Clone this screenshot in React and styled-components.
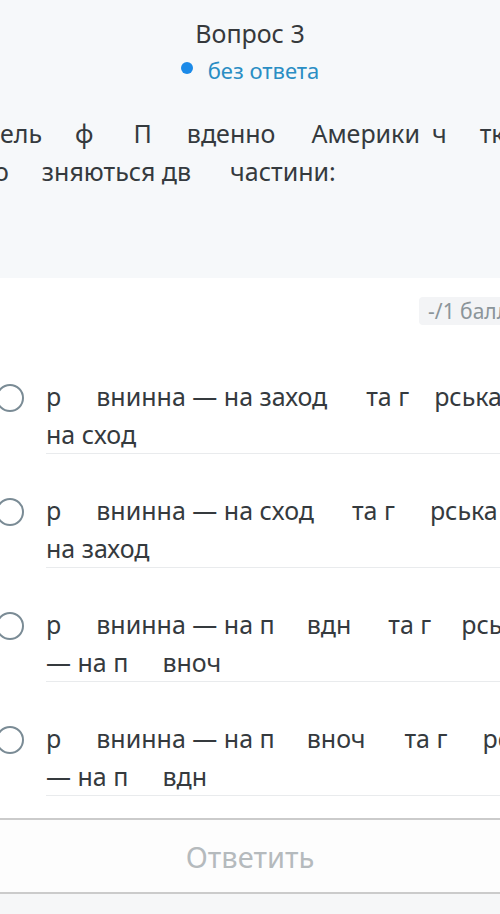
import React from 'react';
import styled, { createGlobalStyle } from 'styled-components';

const GlobalStyle = createGlobalStyle`
  body {
    margin: 0;
    background: #f6f7f8;
    font-family: "Noto Sans", Roboto, sans-serif;
    overflow-x: hidden;
  }
`;

const Page = styled.div`
        width: 500px;
        overflow: hidden;
        background: #fff;
      `,
      QuestionPanel = styled.section`
        background: #f6f8fa;
        padding: 17px 0 88px;
      `,
      Title = styled.h1`
        margin: 0;
        text-align: center;
        font-size: 25px;
        line-height: 32px;
        font-weight: 400;
        color: #36393c;
      `,
      Status = styled.div`
        display: flex;
        align-items: center;
        justify-content: center;
        gap: 15px;
        margin-top: 6px;
        font-size: 22px;
        line-height: 30px;
        color: #2a8ec4;
      `,
      Dot = styled.span`
        width: 12px;
        height: 12px;
        border-radius: 50%;
        background: #1b8ae8;
        margin-top: -4px;
      `,
      QuestionText = styled.div`
        margin-top: 29px;
        font-size: 25px;
        line-height: 38px;
        color: #353a3e;
      `,
      Line = styled.div`
        display: flex;
        white-space: pre;
      `,
      Word = styled.span`
        flex-shrink: 0;
        margin-left: ${p => p.gap || 0}px;
      `,
      ScoreRow = styled.div`
        display: flex;
        justify-content: flex-end;
        margin: 19px -18px 0 0;
      `,
      ScorePill = styled.span`
        height: 28px;
        line-height: 28px;
        padding: 0 9px;
        border-radius: 4px;
        background: #f3f4f6;
        font-size: 21px;
        color: #8b959a;
        white-space: nowrap;
      `,
      OptionList = styled.div`
        margin-top: 15px;
      `,
      Option = styled.label`
        display: flex;
        align-items: center;
        gap: 22px;
        margin-left: -4px;
      `,
      Radio = styled.span`
        flex-shrink: 0;
        width: 24px;
        height: 24px;
        border: 2.5px solid #7a8b95;
        border-radius: 50%;
        margin-top: 1px;
      `,
      OptionBody = styled.div`
        flex: 1;
        min-width: 0;
        padding-top: 37px;
        border-bottom: 1px solid #e9ebed;
        font-size: 25px;
        line-height: 38px;
        color: #353a3e;
      `,
      Footer = styled.footer`
        margin-top: 22px;
        height: 72px;
        display: flex;
        align-items: center;
        justify-content: center;
        border-top: 2px solid #cbcbcb;
        border-bottom: 2px solid #cbcbcb;
        background: #fdfdfd;
      `,
      SubmitButton = styled.button`
        border: none;
        background: none;
        padding: 0;
        font-family: inherit;
        font-size: 29px;
        color: #b5babd;
      `;

const options = [
  [
    [['р'], ['внинна — на заход', 35], ['та г', 39], ['рська —', 25]],
    [['на сход']]
  ],
  [
    [['р'], ['внинна — на сход', 35], ['та г', 38], ['рська —', 35]],
    [['на заход']]
  ],
  [
    [['р'], ['внинна — на п', 35], ['вдн', 32], ['та г', 37], ['рська', 30]],
    [['— на п'], ['вноч', 34]]
  ],
  [
    [['р'], ['внинна — на п', 35], ['вноч', 32], ['та г', 39], ['рська', 35]],
    [['— на п'], ['вдн', 34]]
  ]
];

const TextLines = ({ lines }) =>
  lines.map((words, i) => (
    <Line key={i}>
      {words.map(([text, gap], j) => (
        <Word key={j} gap={gap}>{text}</Word>
      ))}
    </Line>
  ));

const App = () => (
  <Page>
    <GlobalStyle />
    <QuestionPanel>
      <Title>Вопрос 3</Title>
      <Status>
        <Dot />
        без ответа
      </Status>
      <QuestionText>
        <TextLines
          lines={[
            [['ель'], ['ф', 33], ['П', 40], ['вденно', 35], ['Америки', 36], ['ч', 12], ['тк', 33]],
            [['о', -6], ['зняються дв', 33], ['частини:', 39]]
          ]}
        />
      </QuestionText>
    </QuestionPanel>
    <ScoreRow>
      <ScorePill>-/1 балл</ScorePill>
    </ScoreRow>
    <OptionList>
      {options.map((lines, i) => (
        <Option key={i}>
          <Radio />
          <OptionBody>
            <TextLines lines={lines} />
          </OptionBody>
        </Option>
      ))}
    </OptionList>
    <Footer>
      <SubmitButton>Ответить</SubmitButton>
    </Footer>
  </Page>
);

export default App;
